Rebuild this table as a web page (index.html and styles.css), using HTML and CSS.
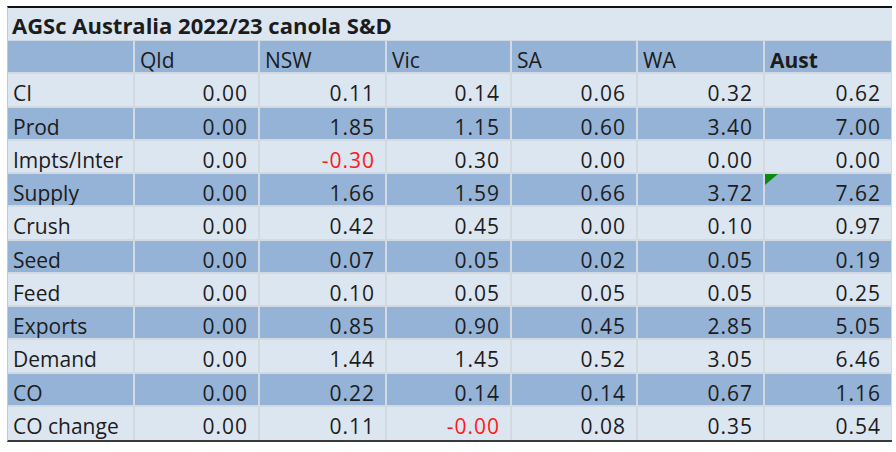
FILE: index.html
```html
<!DOCTYPE html>
<html>
<head>
<meta charset="utf-8">
<link rel="stylesheet" href="styles.css">
</head>
<body>
<div class="sheet">
  <div class="title">AGSc Australia 2022/23 canola S&amp;D</div>
  <div class="grid">
    <div class="c h"></div><div class="c h">Qld</div><div class="c h">NSW</div><div class="c h">Vic</div><div class="c h">SA</div><div class="c h">WA</div><div class="c h b">Aust</div>

    <div class="c l">CI</div><div class="c l n">0.00</div><div class="c l n">0.11</div><div class="c l n">0.14</div><div class="c l n">0.06</div><div class="c l n">0.32</div><div class="c l n">0.62</div>

    <div class="c d">Prod</div><div class="c d n">0.00</div><div class="c d n">1.85</div><div class="c d n">1.15</div><div class="c d n">0.60</div><div class="c d n">3.40</div><div class="c d n">7.00</div>

    <div class="c l">Impts/Inter</div><div class="c l n">0.00</div><div class="c l n red">-0.30</div><div class="c l n">0.30</div><div class="c l n">0.00</div><div class="c l n">0.00</div><div class="c l n">0.00</div>

    <div class="c d">Supply</div><div class="c d n">0.00</div><div class="c d n">1.66</div><div class="c d n">1.59</div><div class="c d n">0.66</div><div class="c d n">3.72</div><div class="c d n note">7.62</div>

    <div class="c l">Crush</div><div class="c l n">0.00</div><div class="c l n">0.42</div><div class="c l n">0.45</div><div class="c l n">0.00</div><div class="c l n">0.10</div><div class="c l n">0.97</div>

    <div class="c d">Seed</div><div class="c d n">0.00</div><div class="c d n">0.07</div><div class="c d n">0.05</div><div class="c d n">0.02</div><div class="c d n">0.05</div><div class="c d n">0.19</div>

    <div class="c l">Feed</div><div class="c l n">0.00</div><div class="c l n">0.10</div><div class="c l n">0.05</div><div class="c l n">0.05</div><div class="c l n">0.05</div><div class="c l n">0.25</div>

    <div class="c d">Exports</div><div class="c d n">0.00</div><div class="c d n">0.85</div><div class="c d n">0.90</div><div class="c d n">0.45</div><div class="c d n">2.85</div><div class="c d n">5.05</div>

    <div class="c l">Demand</div><div class="c l n">0.00</div><div class="c l n">1.44</div><div class="c l n">1.45</div><div class="c l n">0.52</div><div class="c l n">3.05</div><div class="c l n">6.46</div>

    <div class="c d">CO</div><div class="c d n">0.00</div><div class="c d n">0.22</div><div class="c d n">0.14</div><div class="c d n">0.14</div><div class="c d n">0.67</div><div class="c d n">1.16</div>

    <div class="c l last">CO change</div><div class="c l n last">0.00</div><div class="c l n last">0.11</div><div class="c l n last red">-0.00</div><div class="c l n last">0.08</div><div class="c l n last">0.35</div><div class="c l n last">0.54</div>
  </div>
</div>
</body>
</html>
```

FILE: styles.css
```css
html, body {
  margin: 0;
  padding: 0;
  background: #ffffff;
}

body {
  font-family: "Open Sans", "Liberation Sans", sans-serif;
  color: #1c1c1c;
}

.sheet {
  margin: 6px 0 0 7px;
  width: 884px;
  border-top: 2px solid #111111;
  border-left: 1px solid #c4c8ce;
  border-bottom: 2px solid #3a3a3a;
  background: #dce6f1;
}

.title {
  height: 33px;
  box-sizing: border-box;
  padding: 3px 0 0 4px;
  font-size: 22px;
  font-weight: 700;
  line-height: 28px;
  border-bottom: 1px solid #cfd6df;
}

.grid {
  display: grid;
  grid-template-columns: 127px 125px 127px 125px 126px 127px 127px;
  grid-auto-rows: 33.25px;
}

.c {
  box-sizing: border-box;
  font-size: 21px;
  line-height: 30px;
  padding: 4px 5px 0 5px;
  white-space: nowrap;
  overflow: hidden;
  border-right: 2px solid #d3d9e1;
  border-bottom: 2px solid #d3d9e1;
}

.c:nth-child(7n) {
  border-right: 1px solid #d3d9e1;
}

.h, .d {
  background: #95b3d7;
}

.l {
  background: #dce6f1;
}

.n {
  text-align: right;
  padding-right: 10px;
  letter-spacing: 1px;
}

.b {
  font-weight: 700;
}

.red {
  color: #ff1a1a;
}

.last {
  border-bottom: none;
}

.note {
  position: relative;
}

.note::before {
  content: "";
  position: absolute;
  left: 0;
  top: 0;
  width: 0;
  height: 0;
  border-top: 11px solid #0b8a12;
  border-right: 13px solid transparent;
}
```
